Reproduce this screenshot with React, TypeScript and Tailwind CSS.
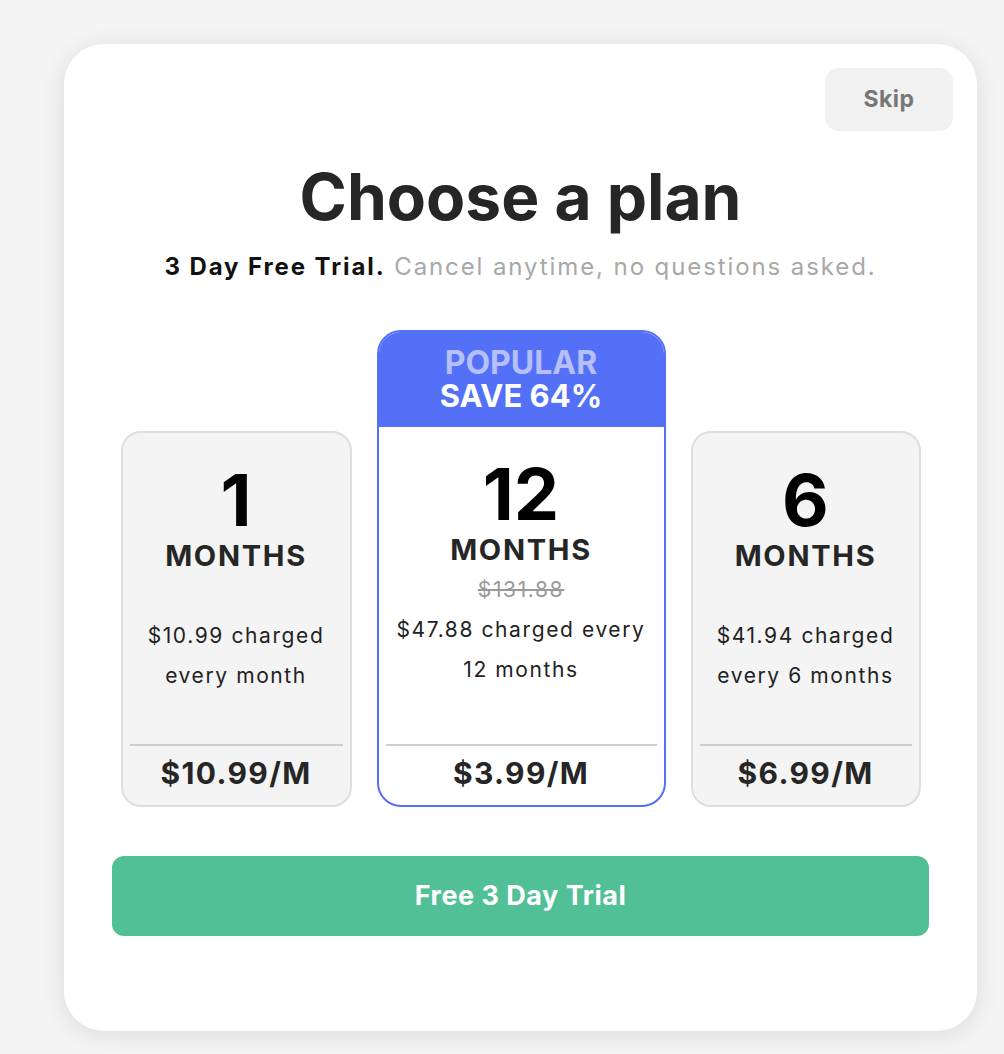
import React from "react";

type Plan = {
  n: string;
  strike?: string;
  desc: [string, string];
  price: string;
};

function SideCard({ plan, w }: { plan: Plan; w: string }) {
  return (
    <div className={`${w} h-[376px] flex flex-col rounded-[20px] border-2 border-[#dedede] bg-[#f4f4f4]`}>
      <Body plan={plan} />
    </div>
  );
}

function Body({ plan }: { plan: Plan }) {
  return (
    <div className="flex flex-1 flex-col items-center pt-[31px] text-center">
      <div className="text-[72px] font-bold leading-[72px] text-black">{plan.n}</div>
      <div className="text-[29px] font-bold leading-[40px] tracking-[1.7px] text-[#262626]">MONTHS</div>
      <div className="h-[40px] text-[21px] leading-[40px] tracking-[1.6px] text-[#9a9a9a] line-through">
        {plan.strike ?? ""}
      </div>
      <div className="text-[21px] leading-[40px] tracking-[1.6px] text-[#222]">
        <div>{plan.desc[0]}</div>
        <div>{plan.desc[1]}</div>
      </div>
      <div className="flex-1" />
      <div className="h-[2px] self-stretch mx-[7px] bg-[#cfcfcf]" />
      <div className="mt-[7px] mb-[12px] text-[30px] font-bold leading-[40px] tracking-[1.35px] text-[#262626]">
        {plan.price}
      </div>
    </div>
  );
}

export default function App() {
  return (
    <div
      className="min-h-[1054px] w-full bg-[#f4f4f4] pt-[44px] pb-[23px]"
      style={{ fontFamily: "Inter, 'Noto Sans', sans-serif" }}
    >
      <div className="ml-[64px] w-[913px] h-[987px] rounded-[40px] bg-white shadow-[0_4px_24px_rgba(0,0,0,0.10)] px-[24px] pt-[24px]">
        <div className="flex justify-end">
          <button className="h-[63px] w-[128px] rounded-[14px] bg-[#f1f1f1] text-[23px] font-bold tracking-[0.5px] text-[#777]">
            Skip
          </button>
        </div>
        <h1 className="mt-[27px] text-center text-[64px] font-bold leading-[77px] text-[#262626]">
          Choose a plan
        </h1>
        <p className="mt-[16px] text-center text-[24px] leading-[32px] tracking-[1.9px]">
          <span className="font-bold text-[#111]">3 Day Free Trial.</span>{" "}
          <span className="text-[#a8a8a8]">Cancel anytime, no questions asked.</span>
        </p>
        <div className="mt-[47px] flex items-end justify-center gap-[25px]">
          <SideCard
            w="w-[231px]"
            plan={{ n: "1", desc: ["$10.99 charged", "every month"], price: "$10.99/M" }}
          />
          <div className="flex h-[477px] w-[289px] flex-col overflow-hidden rounded-[24px] border-2 border-[#5470f6] bg-white">
            <div className="flex h-[95px] flex-col items-center justify-center bg-[#5470f6] pb-[2px] font-bold leading-[33px]">
              <div className="text-[32px] text-[#b5c0fb]">POPULAR</div>
              <div className="text-[31px] text-white">SAVE 64%</div>
            </div>
            <Body
              plan={{
                n: "12",
                strike: "$131.88",
                desc: ["$47.88 charged every", "12 months"],
                price: "$3.99/M",
              }}
            />
          </div>
          <SideCard
            w="w-[230px]"
            plan={{ n: "6", desc: ["$41.94 charged", "every 6 months"], price: "$6.99/M" }}
          />
        </div>
        <button className="mx-auto mt-[49px] block h-[80px] w-[817px] rounded-[12px] bg-[#51c096] text-[27px] font-bold tracking-[0.5px] text-white">
          Free 3 Day Trial
        </button>
      </div>
    </div>
  );
}
